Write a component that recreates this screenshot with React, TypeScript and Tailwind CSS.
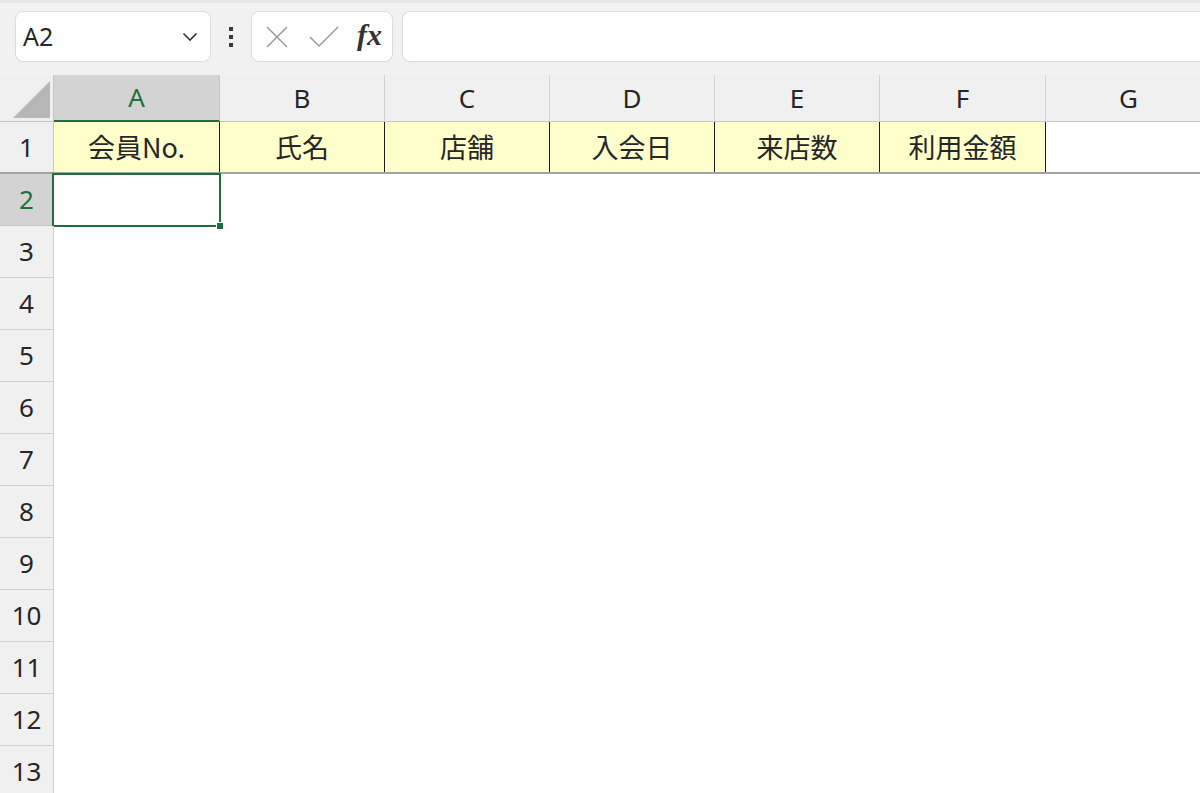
import React from 'react';

const FONT = { fontFamily: '"Noto Sans", "Noto Sans CJK JP", sans-serif' };

const cols = [
  { key: 'A', w: 'w-[166px]', head: '会員No.' },
  { key: 'B', w: 'w-[165px]', head: '氏名' },
  { key: 'C', w: 'w-[165px]', head: '店舗' },
  { key: 'D', w: 'w-[165px]', head: '入会日' },
  { key: 'E', w: 'w-[165px]', head: '来店数' },
  { key: 'F', w: 'w-[166px]', head: '利用金額' },
];

const rows = [2, 3, 4, 5, 6, 7, 8, 9, 10, 11, 12, 13, 14];

// top bar with name box + formula input
const FormulaBar: React.FC = () => (
  <div className="h-[75px] bg-[#f1f1f1] border-t-[3px] border-[#e7e7e7] flex items-start pt-[8px] pl-[15px]">
    <div className="w-[196px] h-[51px] bg-white border border-[#dcdcdc] rounded-[8px] flex items-center justify-between pl-[7px] pr-[12px]">
      <span className="text-[25px] text-[#262626]">A2</span>
      <svg width="16" height="10" viewBox="0 0 16 10" fill="none">
        <path d="M1.5 1.5 L8 8 L14.5 1.5" stroke="#333" strokeWidth="1.6" />
      </svg>
    </div>
    <div className="w-[40px] h-[51px] flex flex-col items-center justify-center gap-[4px]">
      <span className="w-[4px] h-[4px] bg-[#3a3a3a]" />
      <span className="w-[4px] h-[4px] bg-[#3a3a3a]" />
      <span className="w-[4px] h-[4px] bg-[#3a3a3a]" />
    </div>
    <div className="w-[142px] h-[51px] bg-white border border-[#dcdcdc] rounded-[8px] flex items-center pl-[13px] gap-[20px]">
      <svg width="24" height="22" viewBox="0 0 24 22" fill="none">
        <path d="M2 1 L22 21 M22 1 L2 21" stroke="#9a9a9a" strokeWidth="1.5" />
      </svg>
      <svg width="30" height="22" viewBox="0 0 30 22" fill="none">
        <path d="M1 11 L10 20 L29 1" stroke="#9a9a9a" strokeWidth="1.5" />
      </svg>
      <span
        className="text-[30px] italic font-bold text-[#333] leading-none -mt-[4px] -ml-[2px]"
        style={{ fontFamily: '"Liberation Serif", "DejaVu Serif", serif' }}
      >
        fx
      </span>
    </div>
    <div className="ml-[9px] flex-1 h-[51px] bg-white border border-[#dcdcdc] rounded-l-[8px] border-r-0" />
  </div>
);

export default function App() {
  return (
    <div className="w-[1200px] h-[793px] overflow-hidden bg-white text-[#262626]" style={FONT}>
      <FormulaBar />

      {/* column headers */}
      <div className="flex h-[47px] bg-[#f0f0f0] border-b border-[#c6c6c6]">
        <div className="w-[54px] shrink-0 border-r border-[#c6c6c6] flex items-end justify-end pr-[3px] pb-[3px]">
          <div className="w-[37px] h-[37px] bg-[#b7b7b7] [clip-path:polygon(100%_0,100%_100%,0_100%)]" />
        </div>
        {cols.map((c) => (
          <div
            key={c.key}
            className={
              c.key === 'A'
                ? `${c.w} shrink-0 bg-[#d3d3d3] border-r border-[#c6c6c6] border-b-2 border-b-[#1e6e42] -mb-px flex items-center justify-center text-[26px] text-[#1e6e42]`
                : `${c.w} shrink-0 border-r border-[#d0d0d0] flex items-center justify-center text-[26px]`
            }
          >
            {c.key}
          </div>
        ))}
        <div className="w-[165px] shrink-0 flex items-center justify-center text-[26px]">G</div>
      </div>

      {/* row 1 with labels */}
      <div className="flex h-[52px] border-b-2 border-[#a3a3a3]">
        <div className="w-[54px] shrink-0 bg-[#f0f0f0] border-r border-[#c6c6c6] flex items-center justify-center text-[26px]">
          1
        </div>
        {cols.map((c) => (
          <div
            key={c.key}
            className={`${c.w} shrink-0 bg-[#ffffcc] border-r border-[#1c1c1c] flex items-center justify-center text-[27px]`}
            style={{ fontFamily: '"Noto Sans CJK JP", sans-serif' }}
          >
            {c.head}
          </div>
        ))}
        <div className="flex-1" />
      </div>

      {/* empty rows */}
      {rows.map((r) => (
        <div key={r} className="flex h-[52px] relative">
          <div
            className={
              r === 2
                ? 'w-[54px] shrink-0 bg-[#d3d3d3] border-r border-b border-[#c6c6c6] flex items-center justify-center text-[26px] text-[#1e6e42]'
                : 'w-[54px] shrink-0 bg-[#f0f0f0] border-r border-b border-[#cfcfcf] flex items-center justify-center text-[26px]'
            }
          >
            {r}
          </div>
          <div className="flex-1" />
          {r === 2 && (
            <div className="absolute left-[52px] top-[-1px] w-[169px] h-[54px] border-2 border-[#1e6e42]">
              <span className="absolute -right-[5px] -bottom-[5px] w-[8px] h-[8px] bg-[#1e6e42] border border-white" />
            </div>
          )}
        </div>
      ))}
    </div>
  );
}
